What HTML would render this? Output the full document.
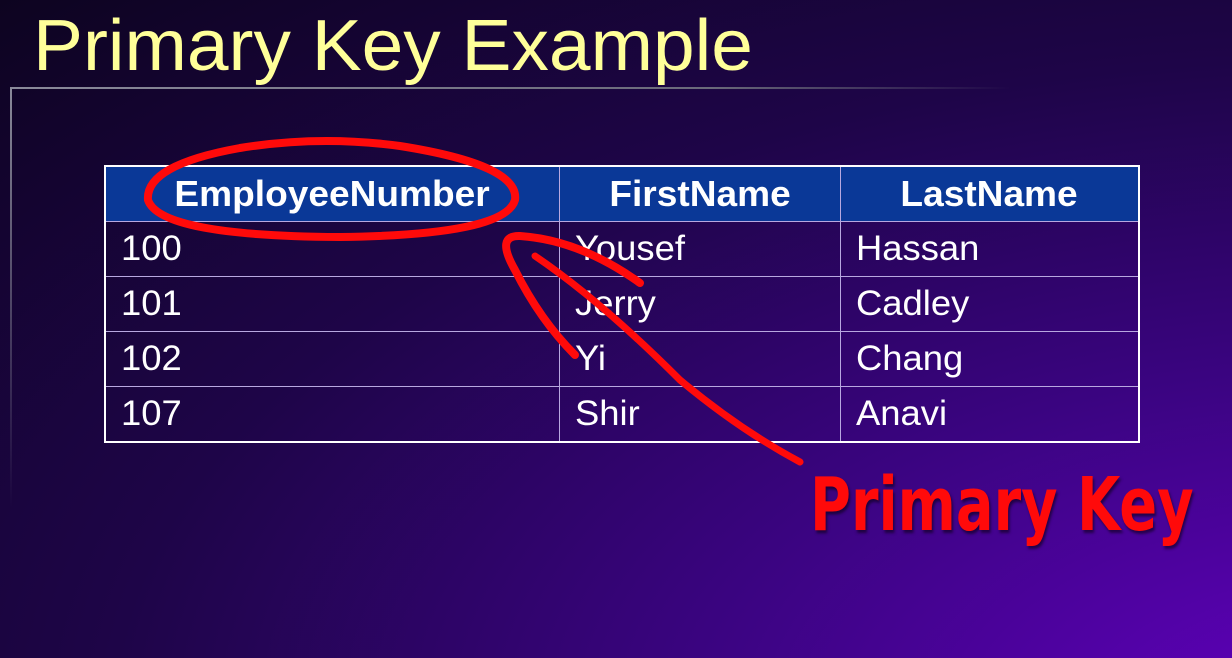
<!DOCTYPE html>
<html><head><style>
html,body{margin:0;padding:0}
body{width:1232px;height:658px;overflow:hidden;position:relative;
background:radial-gradient(ellipse at 110% 110%,#6200c0 0%,#3a0480 35%,#1e0548 65%,#0d0420 100%);
font-family:"Liberation Sans",sans-serif}
.title{position:absolute;left:33px;top:3px;font-size:72px;color:#ffff99;white-space:nowrap;transform:scaleX(1.04);transform-origin:0 0;line-height:86px}
.hl{position:absolute;left:10px;top:87px;width:1000px;height:2px;background:linear-gradient(90deg,#8a8a9a,#6a6a7a 70%,rgba(80,80,100,0))}
.vl{position:absolute;left:10px;top:88px;width:2px;height:420px;background:linear-gradient(#8a8a9a,rgba(80,80,100,0))}
table{position:absolute;left:104px;top:165px;width:1036px;height:274px;border-collapse:collapse;border:2px solid #fff}
td{border:1px solid #b8a8e0;color:#fff;font-size:35px;padding:0 0 0 15px;height:54px;white-space:nowrap}
tr.h td{background:#0a3897;font-weight:bold;text-align:center;padding:0;font-size:36px}
td span{display:inline-block;transform:scaleX(1.04);transform-origin:0 50%}
tr.h td span{transform-origin:50% 50%;transform:scaleX(1.03)}
.pk{position:absolute;left:810px;top:462px;color:#ff0a0a;font-size:74px;font-weight:bold;white-space:nowrap;transform:scaleX(0.755);transform-origin:0 0;font-family:"DejaVu Sans",sans-serif;text-shadow:2px 3px 3px rgba(0,0,0,.5)}
</style></head><body>
<div class="title">Primary Key Example</div>
<div class="hl"></div><div class="vl"></div>
<table>
<tr class="h"><td style="width:453px"><span>EmployeeNumber</span></td><td style="width:280px"><span>FirstName</span></td><td><span>LastName</span></td></tr>
<tr><td><span>100</span></td><td><span>Yousef</span></td><td><span>Hassan</span></td></tr>
<tr><td><span>101</span></td><td><span>Jerry</span></td><td><span>Cadley</span></td></tr>
<tr><td><span>102</span></td><td><span>Yi</span></td><td><span>Chang</span></td></tr>
<tr><td><span>107</span></td><td><span>Shir</span></td><td><span>Anavi</span></td></tr>
</table>
<svg width="1232" height="658" style="position:absolute;left:0;top:0" fill="none" stroke="#ff0a0a" stroke-linecap="round">
<path d="M240 148 Q320 135 400 146 Q520 165 515 200 Q505 235 340 237 Q160 236 148 200 Q145 165 240 148" stroke-width="8"/>
<path d="M575 355 Q540 320 515 270 Q495 235 520 236 Q580 240 640 283" stroke-width="8"/>
<path d="M535 256 Q600 300 680 380 Q740 430 800 462" stroke-width="7"/>
</svg>
<div class="pk">Primary Key</div>
</body></html>
